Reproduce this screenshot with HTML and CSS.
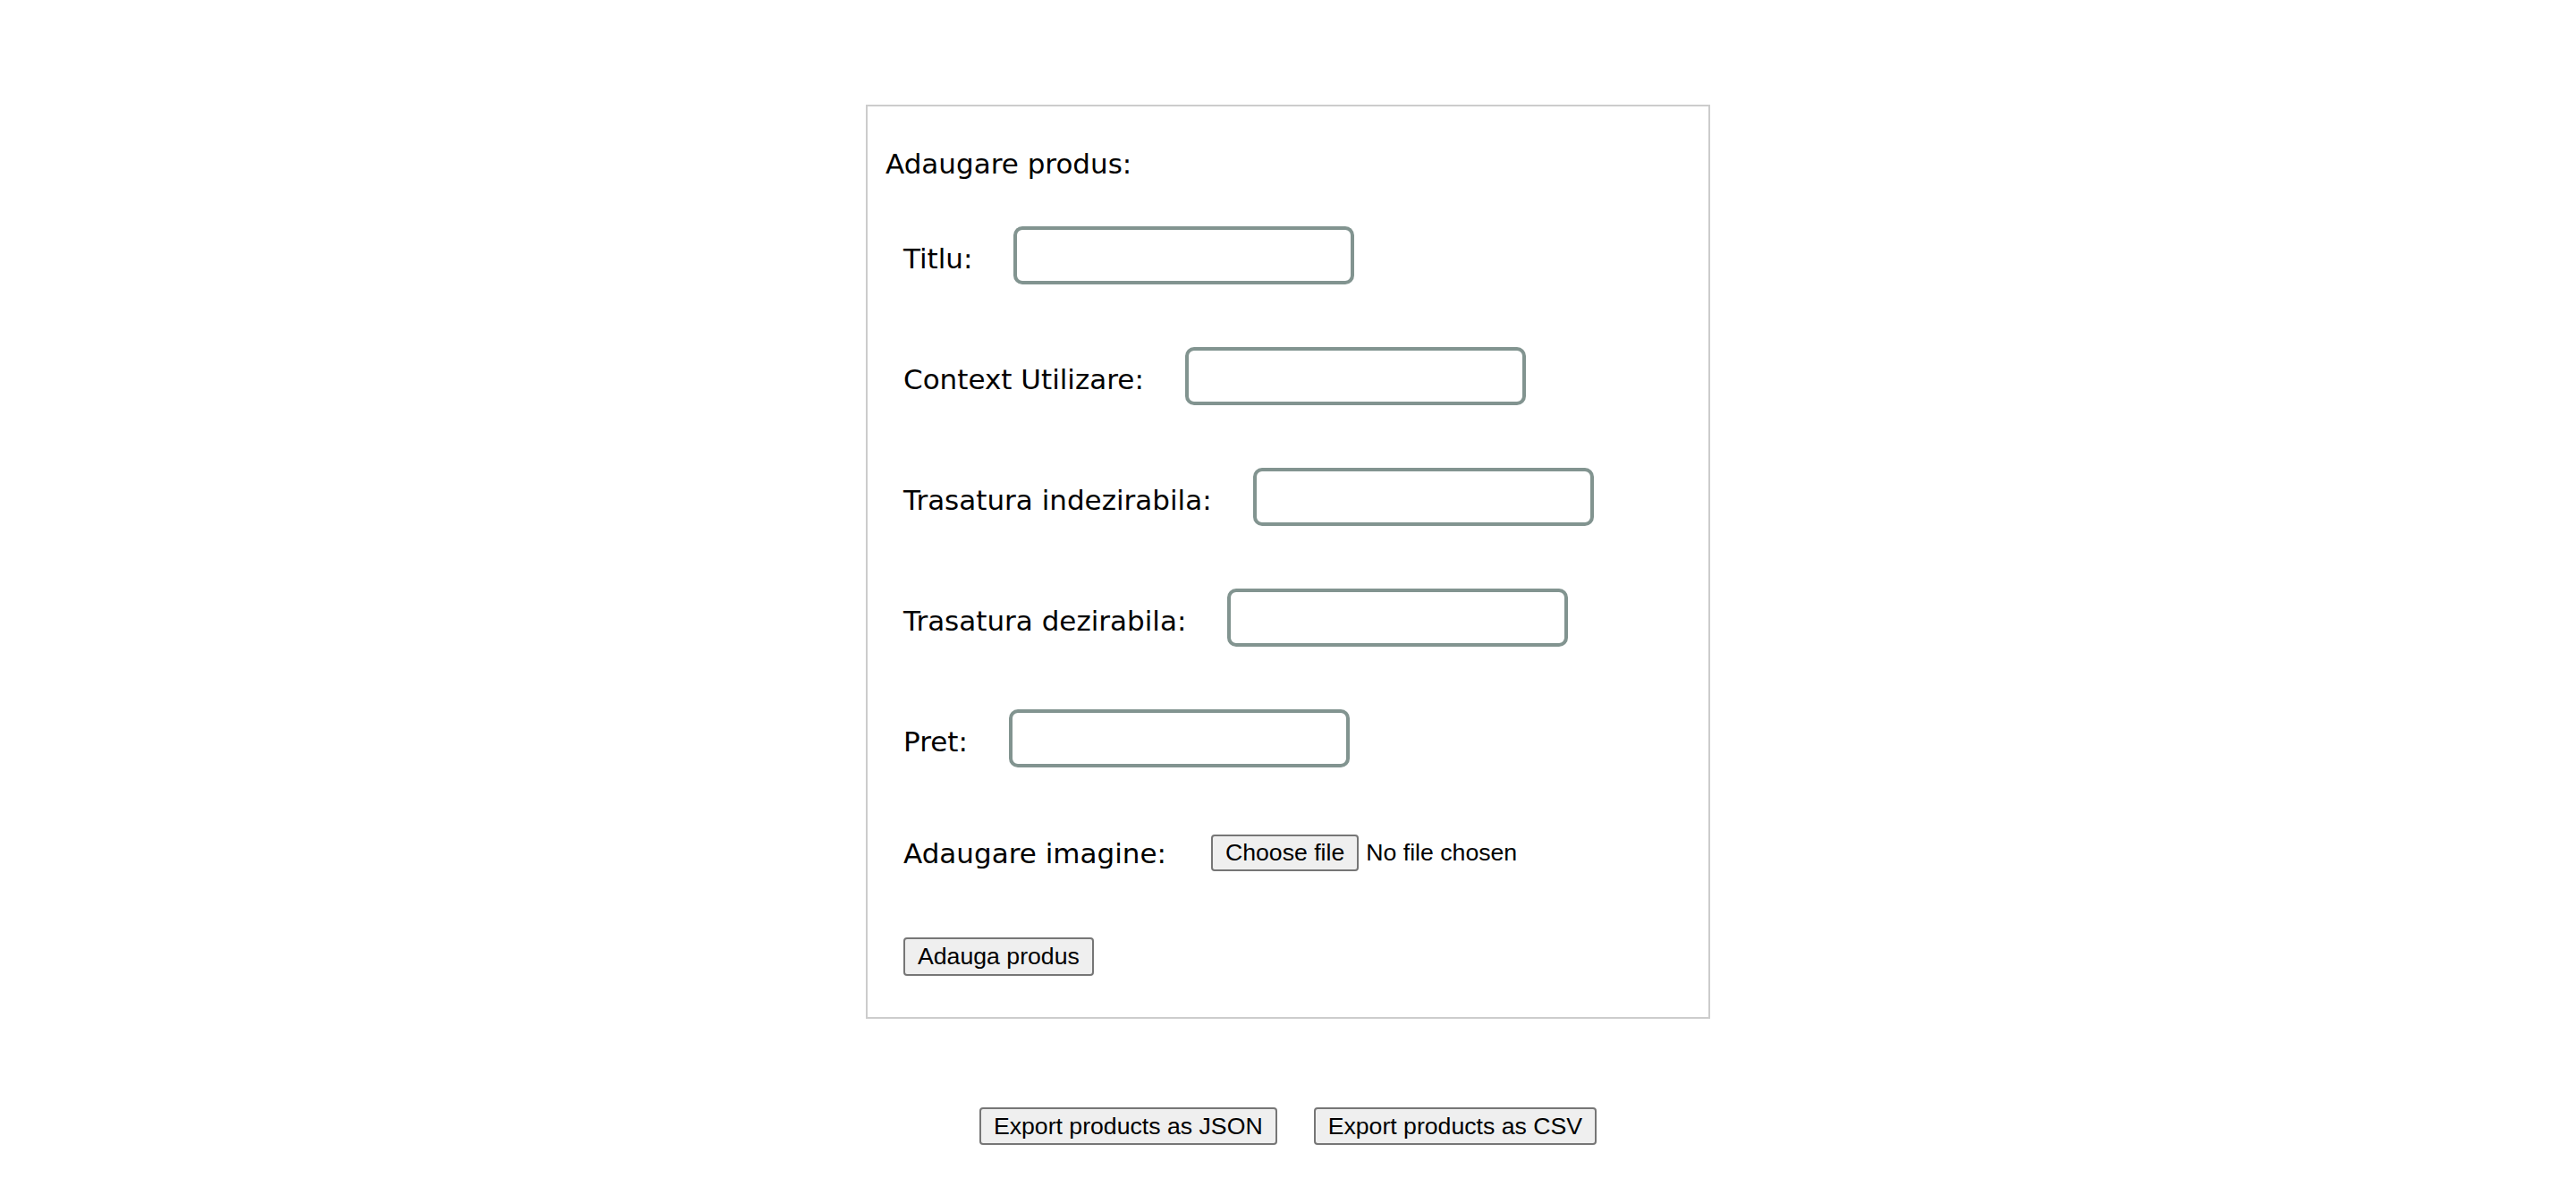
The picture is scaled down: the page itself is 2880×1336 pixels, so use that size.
FILE: index.html
```html
<!DOCTYPE html>
<html lang="ro">
<head>
<meta charset="utf-8">
<title>Adaugare produs</title>
<link rel="stylesheet" href="styles.css">
</head>
<body>
<main class="page">
  <form class="card">
    <h2 class="card-title">Adaugare produs:</h2>
    <div class="field">
      <label class="field-label" for="titlu">Titlu:</label>
      <input class="field-input" id="titlu" type="text">
    </div>
    <div class="field">
      <label class="field-label" for="context">Context Utilizare:</label>
      <input class="field-input" id="context" type="text">
    </div>
    <div class="field">
      <label class="field-label" for="indez">Trasatura indezirabila:</label>
      <input class="field-input" id="indez" type="text">
    </div>
    <div class="field">
      <label class="field-label" for="dez">Trasatura dezirabila:</label>
      <input class="field-input" id="dez" type="text">
    </div>
    <div class="field">
      <label class="field-label" for="pret">Pret:</label>
      <input class="field-input" id="pret" type="text">
    </div>
    <div class="field field--file">
      <label class="field-label field-label--file">Adaugare imagine:</label>
      <span class="file-picker">
        <button type="button" class="btn btn--file">Choose file</button>
        <span class="file-status">No file chosen</span>
      </span>
    </div>
    <div class="actions">
      <button type="button" class="btn">Adauga produs</button>
    </div>
  </form>
  <div class="exports">
    <button type="button" class="btn">Export products as JSON</button>
    <button type="button" class="btn">Export products as CSV</button>
  </div>
</main>
</body>
</html>
```

FILE: styles.css
```css
html, body {
  margin: 0;
  padding: 0;
  background: #ffffff;
}

body {
  font-family: "DejaVu Sans", "Noto Sans", sans-serif;
  color: #000000;
}

.page {
  display: flex;
  flex-direction: column;
  align-items: center;
}

.card {
  box-sizing: border-box;
  width: 944px;
  margin-top: 117px;
  border: 2px solid #cccccc;
  padding: 46px 20px 46px 20px;
}

.card-title {
  margin: 0;
  font-size: 31px;
  font-weight: normal;
  line-height: 36px;
}

.field {
  display: flex;
  align-items: center;
  height: 65px;
  margin: 70px 0 0 20px;
}

.card-title + .field {
  margin-top: 52px;
}

.field-label {
  font-size: 31px;
  line-height: 36px;
  padding-top: 6px;
  white-space: nowrap;
}

.field-input {
  box-sizing: border-box;
  width: 381px;
  height: 65px;
  margin: 0 0 0 46px;
  border: 4px solid #829490;
  border-radius: 10px;
  background: #ffffff;
  outline: none;
}

.field--file {
  height: 41px;
  margin-top: 75px;
}

.field-label--file {
  padding-top: 0;
}

.file-picker {
  display: flex;
  align-items: center;
  margin-left: 50px;
}

.btn {
  font-family: "Liberation Sans", Arial, sans-serif;
  font-size: 26.67px;
  line-height: 30.67px;
  padding: 4px 14px;
  border: 2px solid #767676;
  border-radius: 4px;
  background: #efefef;
  color: #000000;
  margin: 0;
}

.btn--file {
  padding: 3px 14px;
}

.file-status {
  margin-left: 8px;
  font-family: "Liberation Sans", Arial, sans-serif;
  font-size: 26.67px;
  line-height: 30.67px;
}

.actions {
  margin: 74px 0 0 20px;
}

.exports {
  display: flex;
  justify-content: center;
  gap: 41px;
  margin-top: 99px;
}
```
